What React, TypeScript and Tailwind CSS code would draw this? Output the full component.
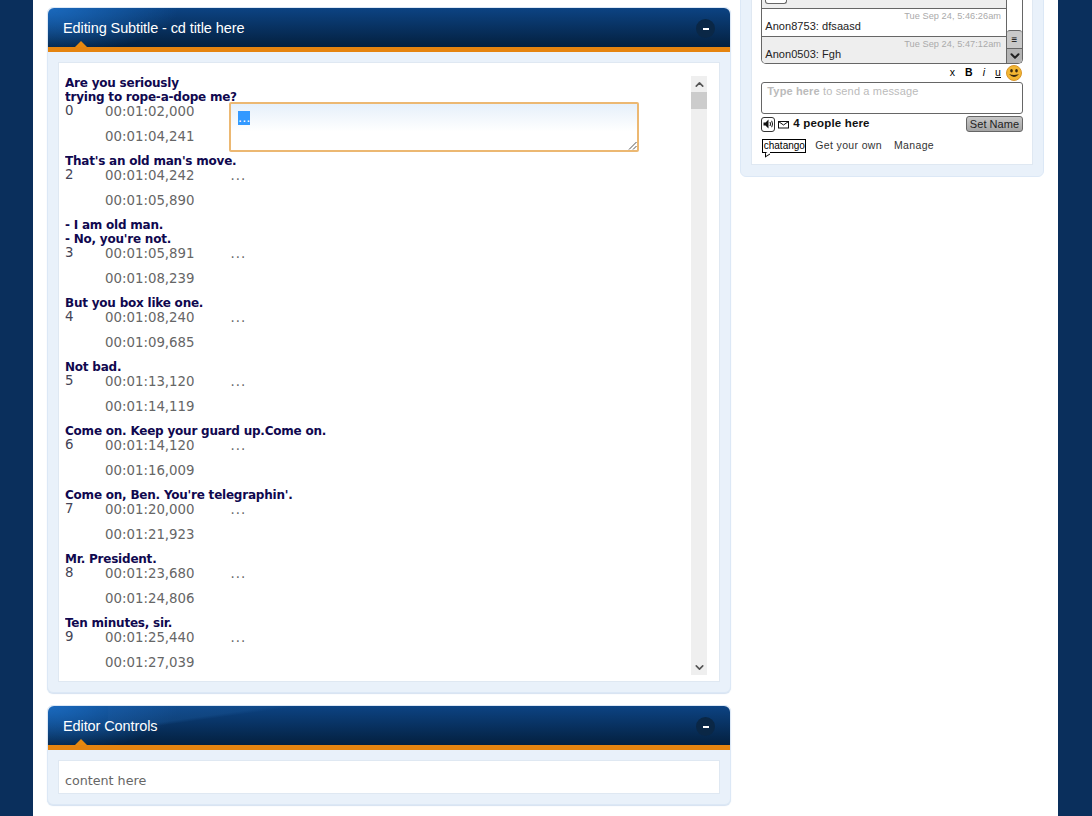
import React from 'react';
import { ChevronUp, ChevronDown } from 'lucide-react';

interface Cue {
  title: string[];
  index: number;
  start: string;
  end: string;
}

const cues: Cue[] = [
  { title: ['Are you seriously', 'trying to rope-a-dope me?'], index: 0, start: '00:01:02,000', end: '00:01:04,241' },
  { title: ["That's an old man's move."], index: 2, start: '00:01:04,242', end: '00:01:05,890' },
  { title: ['- I am old man.', "- No, you're not."], index: 3, start: '00:01:05,891', end: '00:01:08,239' },
  { title: ['But you box like one.'], index: 4, start: '00:01:08,240', end: '00:01:09,685' },
  { title: ['Not bad.'], index: 5, start: '00:01:13,120', end: '00:01:14,119' },
  { title: ['Come on. Keep your guard up.Come on.'], index: 6, start: '00:01:14,120', end: '00:01:16,009' },
  { title: ["Come on, Ben. You're telegraphin'."], index: 7, start: '00:01:20,000', end: '00:01:21,923' },
  { title: ['Mr. President.'], index: 8, start: '00:01:23,680', end: '00:01:24,806' },
  { title: ['Ten minutes, sir.'], index: 9, start: '00:01:25,440', end: '00:01:27,039' },
];

const PanelHeader = ({ title, swoosh }: { title: string; swoosh?: boolean }) => (
  <div className="relative h-[39px] flex items-center justify-between pl-[15px] pr-[15px] pt-[2px] rounded-t-[6px] bg-[radial-gradient(ellipse_130px_46px_at_0px_0px,#1a69bd,transparent),linear-gradient(to_bottom,#0c4383,#04203f)]">
    {swoosh && (
      <div className="absolute left-[60px] top-0 w-[230px] h-[24px] bg-[linear-gradient(172deg,#1a5ba5_0%,#16508f_42%,transparent_48%)] opacity-50" />
    )}
    <span className="relative text-[14.5px] text-white font-['Liberation_Sans',sans-serif] tracking-[-0.1px]">{title}</span>
    <div className="relative w-[19px] h-[19px] rounded-full bg-[#0a2746] flex items-center justify-center">
      <div className="w-[6px] h-[2px] bg-white" />
    </div>
    <div className="absolute left-[27px] bottom-0 w-0 h-0 border-x-[6px] border-x-transparent border-b-[6px] border-b-[#e8890f]" />
  </div>
);

const Panel = ({ title, swoosh, children }: { title: string; swoosh?: boolean; children: React.ReactNode }) => (
  <div className="rounded-[6px] bg-[#e9f1fa] border border-[#dce8f6] shadow-[0_1px_1px_#d5e2f1]">
    <PanelHeader title={title} swoosh={swoosh} />
    <div className="h-[5px] bg-[#e58410]" />
    <div className="p-[10px]">
      <div className="bg-white border border-[#dfe8f2]">{children}</div>
    </div>
  </div>
);

const CueRow = ({ cue }: { cue: Cue }) => (
  <div className="text-[13.33px] font-['DejaVu_Sans',sans-serif]">
    <div className="font-bold text-[12px] tracking-[-0.22px] text-[#10084f] leading-[14px]">
      {cue.title.map((line) => (
        <div key={line}>{line}</div>
      ))}
    </div>
    <div className="flex -mt-[1px] leading-[16px] text-[#445]">
      <div className="w-[40px]">{cue.index}</div>
      <div className="flex flex-col gap-[9px] pt-[1px] text-[#666]">
        <span>{cue.start}</span>
        <span>{cue.end}</span>
      </div>
      <div className="ml-[36px] pt-[1px] text-[#666] tracking-[1px]">...</div>
    </div>
  </div>
);

const Smiley = () => (
  <svg width="16" height="16" viewBox="0 0 16 16">
    <circle cx="8" cy="8" r="7.5" fill="#f2b632" stroke="#d8952a" />
    <ellipse cx="5.5" cy="5.8" rx="1.3" ry="1.8" fill="#3a2a10" />
    <ellipse cx="10.5" cy="5.8" rx="1.3" ry="1.8" fill="#3a2a10" />
    <path d="M3 9 Q8 15 13 9 Q8 11 3 9Z" fill="#3a2a10" />
  </svg>
);

const Speaker = () => (
  <div className="w-[14px] h-[15px] border border-[#333] rounded-[3px] flex items-center justify-center">
    <svg width="11" height="10" viewBox="0 0 11 10">
      <path d="M0.5 3.5h2l3-3v9l-3-3h-2z" fill="#111" />
      <path d="M7 3q1 2 0 4M8.7 1.8q1.7 3.2 0 6.4" fill="none" stroke="#111" />
    </svg>
  </div>
);

const Mail = () => (
  <svg width="11" height="9" viewBox="0 0 11 9">
    <rect x="0.5" y="1.5" width="10" height="6.5" fill="none" stroke="#111" />
    <path d="M0.5 1.5l5 3.5 5-3.5" fill="none" stroke="#111" />
  </svg>
);

const ChatWidget = () => (
  <div className="font-['Liberation_Sans',sans-serif] text-[11px] text-[#222] tracking-[0.05px]">
    <div className="flex border border-t-0 border-[#666] rounded-b-[5px] overflow-hidden h-[66px]">
      <div className="flex-1 flex flex-col min-w-0">
        <div className="h-[11px] bg-[#eee] border-b border-[#666] pl-[3px]">
          <div className="w-[22px] h-[6px] bg-white border border-t-0 border-[#666] rounded-b-[3px]" />
        </div>
        <div className="h-[28px] bg-white border-b border-[#666] pl-[3px] pr-[5px] leading-[12px]">
          <div className="text-right text-[9.2px] text-[#aaa] pt-[1px]">Tue Sep 24, 5:46:26am</div>
          <div className="-mt-[2px]">Anon8753: dfsaasd</div>
        </div>
        <div className="flex-1 bg-[#eee] pl-[3px] pr-[5px] leading-[12px]">
          <div className="text-right text-[9.2px] text-[#aaa] pt-[1px]">Tue Sep 24, 5:47:12am</div>
          <div className="-mt-[2px]">Anon0503: Fgh</div>
        </div>
      </div>
      <div className="w-[16px] flex flex-col border-l border-[#666]">
        <div className="flex-1 bg-white" />
        <div className="h-[18px] bg-[#c9c9c9] border-t border-[#666] rounded-t-[3px] flex items-center justify-center text-[10px] text-black">≡</div>
        <div className="h-[15px] bg-[#b4b4b4] border-t border-[#666] flex items-center justify-center">
          <ChevronDown size={14} strokeWidth={3.5} color="#222" />
        </div>
      </div>
    </div>
    <div className="h-[18px] flex items-center justify-end text-[10.5px] text-black">
      <span className="mr-[10px]">x</span>
      <span className="mr-[10px] font-bold">B</span>
      <span className="mr-[10px] italic">i</span>
      <span className="mr-[5px] underline">u</span>
      <div className="mr-[1px]"><Smiley /></div>
    </div>
    <div className="h-[32px] border border-[#666] rounded-[3px] px-[5px] pt-[1px] text-[#bbb] leading-[15px] tracking-[0.15px]">
      <span className="font-bold">Type here</span> to send a message
    </div>
    <div className="flex items-center mt-[1px] h-[18px]">
      <Speaker />
      <div className="ml-[3px]"><Mail /></div>
      <span className="ml-[4px] font-bold text-[11.5px] text-[#111] tracking-[0.17px]">4 people here</span>
      <button className="ml-auto w-[57px] h-[16px] rounded-[3px] border border-[#666] bg-gradient-to-b from-[#c8c8c8] to-[#a4a4a4] leading-[13px] text-[#222]">Set Name</button>
    </div>
    <div className="flex items-center mt-[3px] h-[20px] text-[#333] text-[10.5px] tracking-[0.35px]">
      <div className="relative w-[44px] h-[14px] ml-[1px] border border-black text-[10px] tracking-normal leading-[11px] text-center text-black">
        chatango
        <div className="absolute left-[2px] top-[12px] w-[5px] h-[4px] bg-white border-l border-b border-black skew-y-[-30deg]" />
      </div>
      <span className="ml-[9px]">Get your own</span>
      <span className="ml-[12px]">Manage</span>
    </div>
  </div>
);

export default function App() {
  return (
    <div className="h-[816px] overflow-hidden bg-[#0a2f5c]">
      <div className="ml-[33px] w-[1025px] h-full bg-white px-[14px] flex gap-[9px]">
        <div className="w-[685px] pt-[7px] flex flex-col gap-[12px]">
          <Panel title="Editing Subtitle - cd title here">
            <div className="relative h-[618px] pl-[6px] pr-[12px] pt-[13px] flex justify-between">
              <div className="flex flex-col gap-[9px] overflow-hidden">
                {cues.map((cue) => (
                  <CueRow key={cue.index} cue={cue} />
                ))}
              </div>
              <div className="w-[16px] h-[599px] bg-[#efefef] flex flex-col items-center justify-between">
                <div className="w-full">
                  <div className="h-[16px] flex items-center justify-center">
                    <ChevronUp size={13} strokeWidth={3} color="#555" />
                  </div>
                  <div className="w-full h-[17px] bg-[#ccc]" />
                </div>
                <div className="h-[16px] flex items-center justify-center">
                  <ChevronDown size={13} strokeWidth={3} color="#555" />
                </div>
              </div>
              {/* the cell being edited sits over the list */}
              <div className="absolute left-[170px] top-[39px] w-[410px] h-[50px] rounded-[2px] border-2 border-[#ecb872] bg-gradient-to-b from-[#e6f0fa] to-white to-[60%] pl-[7px] pt-[7px]">
                <div className="w-fit bg-[#3399ff] text-white text-[13px] leading-[14px] font-['DejaVu_Sans',sans-serif]">...</div>
                <svg className="absolute right-0 bottom-0" width="9" height="9" viewBox="0 0 9 9">
                  <path d="M1 8.5L8.5 1M5 8.5L8.5 5" stroke="#555" />
                </svg>
              </div>
            </div>
          </Panel>
          <Panel title="Editor Controls" swoosh>
            <div className="h-[32px] pl-[6px] flex items-center pt-[8px] text-[12.7px] text-[#666] font-['DejaVu_Sans',sans-serif]">content here</div>
          </Panel>
        </div>
        <div className="w-[304px] h-[177px] flex flex-col justify-end overflow-hidden">
          <div className="shrink-0 bg-[#e9f1fa] border border-[#dce8f6] rounded-b-[6px] px-[10px] pb-[11px]">
            <div className="bg-white border border-t-0 border-[#dfe8f2] pl-[9px] pr-[9px] pb-[8px]">
              <ChatWidget />
            </div>
          </div>
        </div>
      </div>
    </div>
  );
}
